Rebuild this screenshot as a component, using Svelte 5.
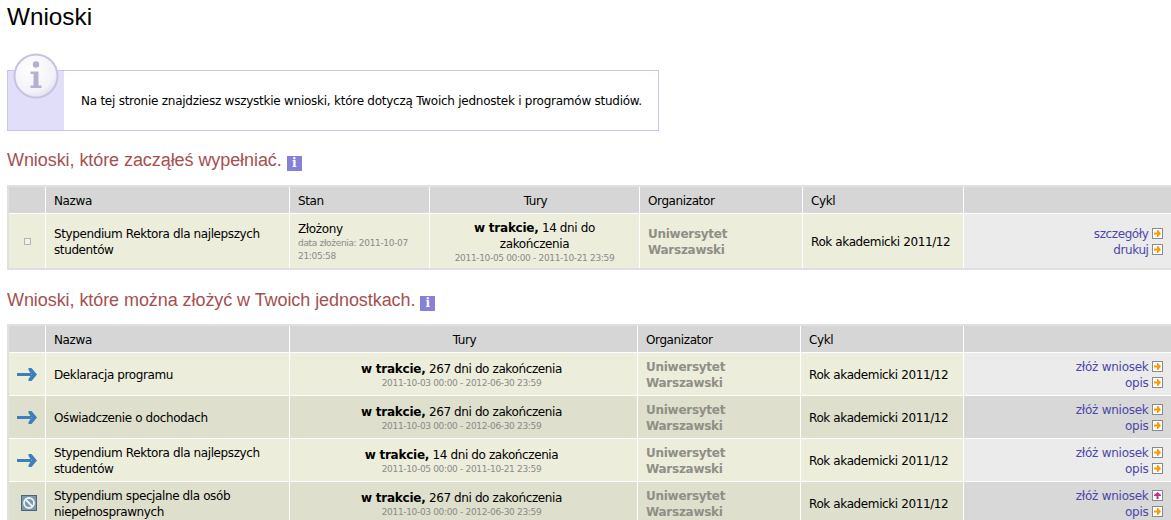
<script>
  const rows = [
    { name: ['Deklaracja programu'], tury: '267 dni do zakończenia', dates: '2011-10-03 00:00 - 2012-06-30 23:59', icon: 'arrow', alt: false, first: 'orange' },
    { name: ['Oświadczenie o dochodach'], tury: '267 dni do zakończenia', dates: '2011-10-03 00:00 - 2012-06-30 23:59', icon: 'arrow', alt: true, first: 'orange' },
    { name: ['Stypendium Rektora dla najlepszych', 'studentów'], tury: '14 dni do zakończenia', dates: '2011-10-05 00:00 - 2011-10-21 23:59', icon: 'arrow', alt: false, first: 'orange' },
    { name: ['Stypendium specjalne dla osób', 'niepełnosprawnych'], tury: '267 dni do zakończenia', dates: '2011-10-03 00:00 - 2012-06-30 23:59', icon: 'ban', alt: true, first: 'pink' }
  ];
</script>

{#snippet go()}
  <svg class="go" width="11" height="11" viewBox="0 0 11 11"><rect x=".5" y=".5" width="10" height="10" fill="#fff" stroke="#8a8a8a"/><path d="M2 4.5h3v2H2z" fill="#f90"/><path d="M5 2h1l3 3.5L6 9H5z" fill="#f90"/></svg>
{/snippet}
{#snippet up()}
  <svg class="go" width="11" height="11" viewBox="0 0 11 11"><rect x=".5" y=".5" width="10" height="10" fill="#fff" stroke="#8a8a8a"/><path d="M4.5 9V5.5h2V9z" fill="#c2308a"/><path d="M2 6V5l3.5-3L9 5v1z" fill="#c2308a"/></svg>
{/snippet}
{#snippet badge()}
  <span class="badge">i</span>
{/snippet}
{#snippet org()}
  <b class="org">Uniwersytet<br>Warszawski</b>
{/snippet}

<div class="page">
  <h1>Wnioski</h1>
  <div class="info">
    <div class="side">
      <svg class="bigi" width="50" height="50" viewBox="0 0 50 50">
        <defs><radialGradient id="g" cx=".4" cy=".35" r=".75"><stop offset="0" stop-color="#fff"/><stop offset=".7" stop-color="#f3f2f8"/><stop offset="1" stop-color="#d8d6e8"/></radialGradient></defs>
        <circle cx="24" cy="24" r="21.5" fill="url(#g)" stroke="#c6c4de" stroke-width="2"/>
        <circle cx="24" cy="12.5" r="3.2" fill="#b3b0d2"/>
        <path d="M18.5 19.5h8v14h3V36h-11v-2.500h3V22h-3z" fill="#b3b0d2"/>
      </svg>
    </div>
    <p>Na tej stronie znajdziesz wszystkie wnioski, które dotyczą Twoich jednostek i programów studiów.</p>
  </div>

  <h2>Wnioski, które zacząłeś wypełniać. {@render badge()}</h2>
  <table class="t1">
    <colgroup><col style="width:36px"><col style="width:244px"><col style="width:140px"><col style="width:210px"><col style="width:163px"><col style="width:161px"><col style="width:240px"></colgroup>
    <thead><tr><th></th><th class="l">Nazwa</th><th class="l">Stan</th><th>Tury</th><th class="l">Organizator</th><th class="l">Cykl</th><th></th></tr></thead>
    <tbody>
      <tr>
        <td class="ic"><span class="box"></span></td>
        <td>Stypendium Rektora dla najlepszych studentów</td>
        <td>Złożony<div class="sm">data złożenia: 2011-10-07 21:05:58</div></td>
        <td class="c"><b>w trakcie,</b> 14 dni do zakończenia<div class="sm">2011-10-05 00:00 - 2011-10-21 23:59</div></td>
        <td>{@render org()}</td>
        <td>Rok akademicki 2011/12</td>
        <td class="act"><div class="inner"><a href="#a">szczegóły</a> {@render go()}<br><a href="#a">drukuj</a> {@render go()}</div></td>
      </tr>
    </tbody>
  </table>

  <h2 class="second">Wnioski, które można złożyć w Twoich jednostkach. {@render badge()}</h2>
  <table class="t2">
    <colgroup><col style="width:36px"><col style="width:244px"><col style="width:348px"><col style="width:163px"><col style="width:163px"><col style="width:240px"></colgroup>
    <thead><tr><th></th><th class="l">Nazwa</th><th>Tury</th><th class="l">Organizator</th><th class="l">Cykl</th><th></th></tr></thead>
    <tbody>
      {#each rows as r}
        <tr class:alt={r.alt}>
          <td class="ic">
            {#if r.icon === 'arrow'}
              <svg width="20" height="13" viewBox="0 0 20 13"><path d="M0 5h14v3H0z" fill="#3d7fb8"/><path d="M11.500 0h3L20 6.500 14.500 13h-3v-2l3-4.500-3-4.500z" fill="#3d7fb8"/></svg>
            {:else}
              <svg class="ban" width="16" height="16" viewBox="0 0 16 16"><rect x=".5" y=".5" width="15" height="15" fill="#7b98ae" stroke="#4f6577"/><circle cx="8" cy="8" r="5" fill="#7b98ae" stroke="#eef2f5" stroke-width="1.8"/><path d="M4.500 4.500l7 7" stroke="#eef2f5" stroke-width="1.800"/></svg>
            {/if}
          </td>
          <td>{r.name[0]}{#if r.name[1]}<br>{r.name[1]}{/if}</td>
          <td class="c"><b>w trakcie,</b> {r.tury}<div class="sm">{r.dates}</div></td>
          <td>{@render org()}</td>
          <td>Rok akademicki 2011/12</td>
          <td class="act"><div class="inner"><a href="#a">złóż wniosek</a> {#if r.first === 'pink'}{@render up()}{:else}{@render go()}{/if}<br><a href="#a">opis</a> {@render go()}</div></td>
        </tr>
      {/each}
    </tbody>
  </table>
</div>

<style>
  :global(body) { margin: 0; background: #fff; }
  .page { width: 1171px; height: 520px; overflow: hidden; padding: 0 0 0 7px; box-sizing: border-box; font-family: "DejaVu Sans", sans-serif; font-size: 12px; color: #000; }
  h1 { margin: 0; padding-top: 2px; height: 54px; box-sizing: border-box; font: 400 24.3px/30px "Liberation Sans", sans-serif; }
  .info { position: relative; width: 652px; height: 61px; margin-top: 16px; border: 1px solid #c9c5f0; box-sizing: border-box; display: flex; }
  .side { width: 56px; background: #e0def8; flex: none; }
  .bigi { position: absolute; left: 4px; top: -19px; }
  .info p { margin: 0; padding: 23px 0 0 17px; line-height: 14px; font-size: 12px; letter-spacing: -0.25px; }
  h2 { margin: 0; padding-top: 18px; height: 54px; box-sizing: border-box; font: 400 18px/22px "Liberation Sans", sans-serif; color: #a5504f; letter-spacing: -0.07px; }
  h2.second { padding-top: 19px; height: 54px; }
  .badge { display: inline-block; width: 15px; height: 15px; background: #8481d6; color: #fff; font: 700 12px/15px "DejaVu Serif", serif; text-align: center; vertical-align: -1px; }
  table { border-collapse: separate; border-spacing: 0; table-layout: fixed; width: 1196px; border: 2px solid #e0e0e0; border-right: 0; letter-spacing: -0.39px; line-height: 16px; }
  th { background: #d6d6d6; font-weight: 400; height: 27px; padding: 1px 0 0 2px; box-sizing: border-box; border-left: 1px solid #fff; border-bottom: 1px solid #fff; text-align: center; }
  th:first-child { border-left: 0; }
  th.l { text-align: left; padding-left: 8px; }
  td { background: #ededdc; padding: 2px 8px 0; border-left: 1px solid #fff; vertical-align: middle; }
  td:first-child { border-left: 0; }
  td b { letter-spacing: -0.25px; }
  .t1 td { height: 54px; box-sizing: border-box; }
  .t2 td { height: 43px; box-sizing: border-box; border-bottom: 1px solid #fff; }
  td.c { text-align: center; padding-top: 3px; }
  .t2 td.c { padding-right: 12px; }
  tr.alt td { background: #dedfcc; }
  td.ic { text-align: center; padding: 0; }
  td.ic svg { display: block; margin: 0 auto; }
  td.ic svg.ban { margin-left: 12px; }
  .box { display: inline-block; width: 5px; height: 5px; border: 1px solid #b5b5b5; background: #f2f2e8; vertical-align: middle; }
  .sm { font-size: 9px; line-height: 13px; color: #8a8a8a; letter-spacing: -0.33px; }
  td b.org { color: #8f8f86; letter-spacing: -0.27px; }
  td.act { background: #ebebeb; padding: 2px 0 0; vertical-align: middle; }
  tr.alt td.act { background: #d8d8d8; }
  .inner { width: 199px; text-align: right; }
  .t2 a { letter-spacing: -0.25px; }
  a { color: #4c46a8; text-decoration: none; }
  .go { vertical-align: -1px; }
</style>
